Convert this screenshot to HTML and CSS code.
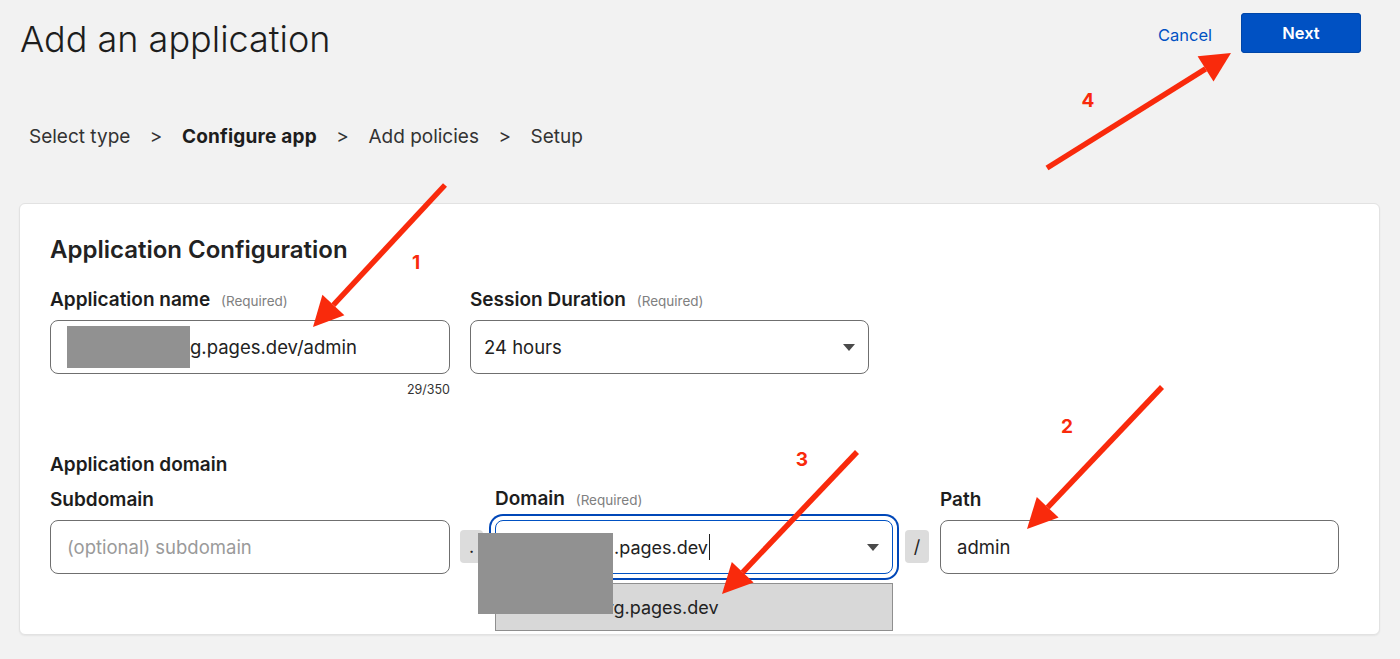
FILE: index.html
```html
<!DOCTYPE html>
<html lang="en">
<head>
<meta charset="utf-8">
<title>Add an application</title>
<link rel="stylesheet" href="styles.css">
</head>
<body>
<header class="topbar">
  <h1 class="title">Add an application</h1>
  <div class="actions">
    <a class="cancel" href="#">Cancel</a>
    <button class="next" type="button">Next</button>
  </div>
</header>

<nav class="steps">
  <span class="step">Select type</span>
  <span class="sep">&gt;</span>
  <span class="step current">Configure app</span>
  <span class="sep">&gt;</span>
  <span class="step">Add policies</span>
  <span class="sep">&gt;</span>
  <span class="step">Setup</span>
</nav>

<section class="card">
  <h2 class="card-title">Application Configuration</h2>

  <div class="row1">
    <div class="field">
      <div class="label">Application name <span class="req">(Required)</span></div>
      <div class="input"><span class="redact"></span>g.pages.dev/admin</div>
      <div class="counter">29/350</div>
    </div>
    <div class="field">
      <div class="label">Session Duration <span class="req">(Required)</span></div>
      <div class="input select">24 hours<span class="caret"></span></div>
    </div>
  </div>

  <div class="group-label">Application domain</div>

  <div class="row2">
    <div class="field sub">
      <div class="label">Subdomain</div>
      <div class="input placeholder">(optional) subdomain</div>
    </div>
    <div class="joiner dot">.</div>
    <div class="field domain">
      <div class="label">Domain <span class="req">(Required)</span></div>
      <div class="input select focused"><span class="domain-text">.pages.dev</span><span class="cursor"></span><span class="caret"></span></div>
      <div class="option"><span class="option-text">rg.pages.dev</span></div>
      <div class="redact-big"></div>
    </div>
    <div class="joiner slash">/</div>
    <div class="field path">
      <div class="label">Path</div>
      <div class="input">admin</div>
    </div>
  </div>
</section>

<svg class="annot" width="1400" height="659" viewBox="0 0 1400 659" xmlns="http://www.w3.org/2000/svg">
  <g stroke="#f92a0c" stroke-width="5.5" stroke-linecap="butt" fill="none">
    <line x1="445" y1="185" x2="333.4" y2="305"/>
    <line x1="1162" y1="387" x2="1047.7" y2="507.3"/>
    <line x1="857" y1="452" x2="742.7" y2="572.3"/>
    <line x1="1047" y1="168" x2="1205.6" y2="68.9"/>
  </g>
  <g fill="#f92a0c">
    <polygon points="313,327 322.4,294.8 344.4,315.2"/>
    <polygon points="1027,529 1036.8,497 1058.6,517.6"/>
    <polygon points="722,594 731.8,562 753.6,582.6"/>
    <polygon points="1231,53 1213.5,81.6 1197.6,56.2"/>
  </g>
  <g fill="#f92a0c" font-family="Inter, 'Liberation Sans', sans-serif" font-weight="700" font-size="19" text-anchor="middle">
    <text x="416" y="269">1</text>
    <text x="1067" y="433">2</text>
    <text x="802" y="466">3</text>
    <text x="1088" y="107">4</text>
  </g>
</svg>
</body>
</html>
```

FILE: styles.css
```css
* { box-sizing: border-box; }

html, body {
  margin: 0;
  padding: 0;
}

body {
  background: #f2f2f2;
  font-family: Inter, "Liberation Sans", sans-serif;
  color: #1d1d1d;
  width: 1400px;
  height: 659px;
  overflow: hidden;
  position: relative;
}

.topbar {
  display: flex;
  justify-content: space-between;
  align-items: flex-start;
  padding: 13px 39px 0 20px;
  height: 53px;
}

.title {
  margin: 6px 0 0 0;
  font-size: 36px;
  line-height: 40px;
  font-weight: 300;
  color: #1d1d1d;
}

.actions {
  display: flex;
  align-items: center;
  gap: 29px;
}

.cancel {
  color: #0051c3;
  text-decoration: none;
  font-size: 16.5px;
  line-height: 20px;
  margin-top: 3px;
}

.next {
  width: 120px;
  height: 40px;
  border: none;
  border-radius: 4px;
  background: #0051c3;
  color: #fff;
  font-family: inherit;
  font-size: 16.5px;
  font-weight: 600;
  box-shadow: inset 0 0 0 1px #0046a8;
}

.steps {
  display: flex;
  align-items: center;
  gap: 19.5px;
  margin-top: 72px;
  padding-left: 29px;
  font-size: 19px;
  line-height: 24px;
  color: #333;
}

.step.current {
  font-weight: 700;
  letter-spacing: 0.2px;
  color: #1d1d1d;
}

.sep {
  color: #333;
}

.card {
  margin: 54px 20px 0 19px;
  height: 432px;
  background: #fff;
  border: 1px solid #e2e2e2;
  border-radius: 6px;
  box-shadow: 0 1px 2px rgba(0, 0, 0, 0.06);
  padding: 32px 30px 0 30px;
}

.card-title {
  margin: 0;
  font-size: 24px;
  line-height: 28px;
  font-weight: 600;
  color: #222;
}

.row1 {
  display: grid;
  grid-template-columns: 400px 399px;
  column-gap: 20px;
  margin-top: 25px;
}

.field {
  display: flex;
  flex-direction: column;
  position: relative;
}

.label {
  font-size: 19px;
  line-height: 22px;
  font-weight: 600;
  color: #1d1d1d;
  margin-bottom: 8px;
  white-space: nowrap;
}

.req {
  font-size: 13.5px;
  font-weight: 400;
  color: #808080;
  margin-left: 6px;
}

.input {
  height: 54px;
  border: 1px solid #6f6f6f;
  border-radius: 8px;
  background: #fff;
  display: flex;
  align-items: center;
  padding: 0 16px;
  font-size: 18.5px;
  color: #222;
  position: relative;
  white-space: nowrap;
}

.input.select {
  padding-left: 13px;
}

.placeholder {
  color: #9a9a9a;
}

.redact {
  display: inline-block;
  width: 123px;
  height: 42px;
  background: #919191;
}

.caret {
  position: absolute;
  right: 13px;
  top: 50%;
  margin-top: -3px;
  width: 0;
  height: 0;
  border-left: 6px solid transparent;
  border-right: 6px solid transparent;
  border-top: 7px solid #4a4a4a;
}

.counter {
  align-self: flex-end;
  font-size: 12.5px;
  line-height: 14px;
  margin-top: 9px;
  color: #333;
}

.group-label {
  margin-top: 57px;
  font-size: 19px;
  line-height: 22px;
  font-weight: 600;
}

.row2 {
  display: flex;
  align-items: flex-end;
  margin-top: 12px;
}

.row2 .label {
  margin-bottom: 9px;
}

.field.sub { width: 400px; }
.field.domain { width: 398px; }
.field.path { width: 399px; }

.joiner {
  height: 33px;
  margin-bottom: 11px;
  background: #dcdcdc;
  border-radius: 4px;
  display: flex;
  align-items: center;
  justify-content: center;
  font-size: 18px;
  color: #222;
}

.joiner.dot {
  width: 23px;
  margin-left: 10px;
  margin-right: 12px;
}

.joiner.slash {
  width: 24px;
  margin-left: 12px;
  margin-right: 11px;
}

.input.focused {
  border-color: #0051c3;
  box-shadow: 0 0 0 4px #fff, 0 0 0 6px #0047b8;
  padding-left: 118px;
  font-size: 18px;
}

.cursor {
  display: inline-block;
  width: 1px;
  height: 26px;
  background: #222;
  margin-left: 1px;
}

.option {
  position: absolute;
  left: 0;
  right: 0;
  top: 95px;
  height: 48px;
  background: #d8d8d8;
  border: 1px solid #8f8f8f;
  display: flex;
  align-items: center;
  padding-left: 111px;
  font-size: 18px;
  color: #222;
  z-index: 2;
}

.redact-big {
  position: absolute;
  left: -17px;
  top: 45px;
  width: 135px;
  height: 81px;
  background: #919191;
  z-index: 3;
}

.annot {
  position: absolute;
  left: 0;
  top: 0;
  pointer-events: none;
  z-index: 10;
}
```
